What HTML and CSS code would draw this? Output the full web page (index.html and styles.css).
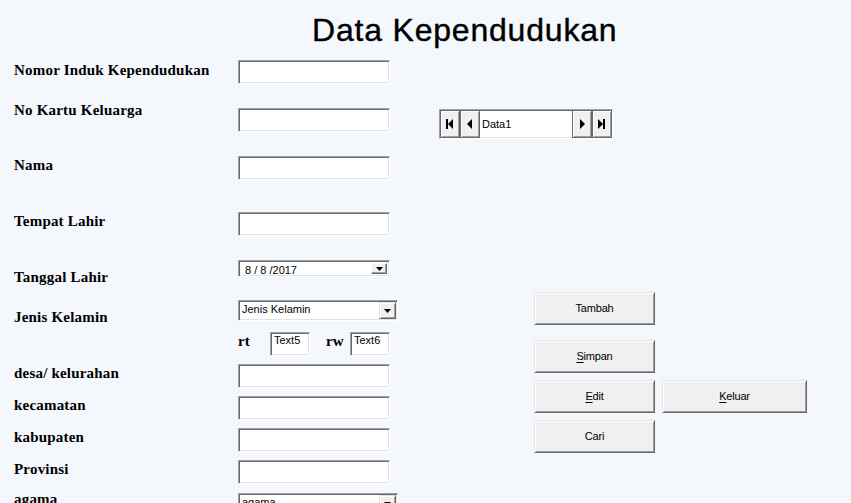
FILE: index.html
```html
<!DOCTYPE html>
<html>
<head>
<meta charset="utf-8">
<link rel="stylesheet" href="styles.css">
</head>
<body>
<div class="form">
  <h1 class="title">Data Kependudukan</h1>
  <div class="main">
    <div class="left">
      <div class="row r1"><span class="lbl">Nomor Induk Kependudukan</span><div class="txt"></div></div>
      <div class="row r2"><span class="lbl">No Kartu Keluarga</span><div class="txt"></div></div>
      <div class="row r3"><span class="lbl">Nama</span><div class="txt"></div></div>
      <div class="row r4"><span class="lbl">Tempat Lahir</span><div class="txt"></div></div>
      <div class="row r5"><span class="lbl">Tanggal Lahir</span>
        <div class="date"><span class="date-text">8 / 8 /2017</span><span class="date-btn"><svg width="7" height="4" viewBox="0 0 7 4"><polygon points="0,0 7,0 3.5,4" fill="#000"/></svg></span></div>
      </div>
      <div class="row r6"><span class="lbl">Jenis Kelamin</span>
        <div class="combo"><span class="combo-text">Jenis Kelamin</span><span class="combo-btn"><svg width="7" height="4" viewBox="0 0 7 4"><polygon points="0,0 7,0 3.5,4" fill="#000"/></svg></span></div>
      </div>
      <div class="row r7"><span class="lbl"></span>
        <div class="rtrw">
          <span class="lbl-sm rt">rt</span><div class="txt small">Text5</div>
          <span class="lbl-sm rw">rw</span><div class="txt small">Text6</div>
        </div>
      </div>
      <div class="row r8"><span class="lbl">desa/ kelurahan</span><div class="txt"></div></div>
      <div class="row r9"><span class="lbl">kecamatan</span><div class="txt"></div></div>
      <div class="row r10"><span class="lbl">kabupaten</span><div class="txt"></div></div>
      <div class="row r11"><span class="lbl">Provinsi</span><div class="txt"></div></div>
      <div class="row r12"><span class="lbl">agama</span>
        <div class="combo"><span class="combo-text">agama</span><span class="combo-btn"><svg width="7" height="4" viewBox="0 0 7 4"><polygon points="0,0 7,0 3.5,4" fill="#000"/></svg></span></div>
      </div>
    </div>
    <div class="right">
      <div class="nav">
        <span class="nav-btn"><svg width="8" height="10" viewBox="0 0 8 10"><rect x="0" y="0" width="2" height="10" fill="#000"/><polygon points="7,0 7,10 2,5" fill="#000"/></svg></span>
        <span class="nav-btn"><svg width="6" height="10" viewBox="0 0 6 10"><polygon points="5,0 5,10 0,5" fill="#000"/></svg></span>
        <span class="nav-text">Data1</span>
        <span class="nav-btn"><svg width="6" height="10" viewBox="0 0 6 10"><polygon points="1,0 1,10 6,5" fill="#000"/></svg></span>
        <span class="nav-btn"><svg width="8" height="10" viewBox="0 0 8 10"><polygon points="0,0 0,10 5,5" fill="#000"/><rect x="5" y="0" width="2" height="10" fill="#000"/></svg></span>
      </div>
      <div class="buttons">
        <button class="btn">Tambah</button>
        <button class="btn b-simpan"><u>S</u>impan</button>
        <div class="btn-row">
          <button class="btn"><u>E</u>dit</button>
          <button class="btn wide"><u>K</u>eluar</button>
        </div>
        <button class="btn">Cari</button>
      </div>
    </div>
  </div>
</div>
</body>
</html>
```

FILE: styles.css
```css
html, body {
  margin: 0;
  padding: 0;
  background: #f4f7fc;
}
.form {
  width: 851px;
  height: 503px;
  overflow: hidden;
  background: #f4f7fc;
  color: #000;
}
.title {
  margin: 0;
  height: 48px;
  box-sizing: border-box;
  padding: 12px 0 0 312px;
  font: normal 32px/36px "Liberation Sans", Arial, sans-serif;
  letter-spacing: 0.8px;
  -webkit-text-stroke: 0.4px #000;
  white-space: nowrap;
}
.main {
  display: flex;
  align-items: flex-start;
}
.left {
  width: 439px;
  padding-top: 12px;
  flex: none;
}
.row {
  display: flex;
  align-items: flex-start;
}
.lbl {
  width: 224px;
  padding-left: 14px;
  flex: none;
  font: bold 15px/17px "Liberation Serif", "Times New Roman", serif;
  letter-spacing: 0.2px;
  white-space: nowrap;
}
.r1 { height: 41px; }
.r1 .lbl { margin-top: 2px; }
.r2 { height: 55px; }
.r2 .lbl { margin-top: 1px; }
.r2 .txt { margin-top: 7px; }
.r3 { height: 56px; }
.r3 .lbl { margin-top: 1px; }
.r4 { height: 48px; }
.r4 .lbl { margin-top: 1px; }
.r5 { height: 40px; }
.r5 .lbl { margin-top: 9px; }
.r6 { height: 32px; }
.r6 .lbl { margin-top: 9px; }
.r7 { height: 32px; }
.r8, .r9, .r10 { height: 32px; }
.r8 .lbl, .r9 .lbl, .r10 .lbl, .r11 .lbl { margin-top: 1px; }
.r11 { height: 31px; }
.r12 .combo { margin-top: 2px; }

.txt {
  width: 152px;
  height: 24px;
  box-sizing: border-box;
  background: #fff;
  border: 1px solid;
  border-color: #a0a0a0 #fff #fff #a0a0a0;
  box-shadow: inset 1px 1px #696969, inset -1px -1px #e3e3e3;
  padding: 1px 2px 0 3px;
  font: 11px/13px "Liberation Sans", Arial, sans-serif;
  overflow: hidden;
  white-space: nowrap;
}
.txt.small { width: 40px; }

.rtrw {
  display: flex;
  align-items: flex-start;
}
.lbl-sm {
  font: bold 15px/17px "Liberation Serif", "Times New Roman", serif;
  margin-top: 1px;
}
.rt { width: 32px; }
.rw { width: 24px; margin-left: 16px; }

.date {
  width: 152px;
  height: 17px;
  box-sizing: border-box;
  display: flex;
  align-items: flex-start;
  background: #fff;
  border: 1px solid;
  border-color: #a0a0a0 #fff #fff #a0a0a0;
  box-shadow: inset 1px 1px #696969, inset -1px -1px #e3e3e3;
  overflow: hidden;
}
.date-text {
  flex: 1;
  padding: 3px 0 0 6px;
  font: 11px/13px "Liberation Sans", Arial, sans-serif;
  white-space: nowrap;
  height: 14px;
  overflow: hidden;
}
.date-btn {
  width: 16px;
  height: 11px;
  box-sizing: border-box;
  margin: 2px 2px 0 0;
  background: #f0f0f0;
  border: 1px solid;
  border-color: #fff #696969 #696969 #fff;
  box-shadow: inset -1px -1px #a0a0a0;
  display: flex;
  align-items: center;
  justify-content: center;
  flex: none;
}

.combo {
  width: 160px;
  height: 21px;
  box-sizing: border-box;
  display: flex;
  align-items: stretch;
  background: #fff;
  border: 1px solid;
  border-color: #a0a0a0 #fff #fff #a0a0a0;
  box-shadow: inset 1px 1px #696969, inset -1px -1px #e3e3e3;
  padding: 1px;
}
.combo-text {
  flex: 1;
  padding: 1px 0 0 2px;
  font: 11px/13px "Liberation Sans", Arial, sans-serif;
  white-space: nowrap;
  overflow: hidden;
}
.combo-btn {
  width: 17px;
  box-sizing: border-box;
  background: #f0f0f0;
  border: 1px solid;
  border-color: #e3e3e3 #696969 #696969 #e3e3e3;
  box-shadow: inset 1px 1px #fff, inset -1px -1px #a0a0a0;
  display: flex;
  align-items: center;
  justify-content: center;
  flex: none;
}

.right {
  flex: none;
}
.nav {
  margin-top: 61px;
  width: 174px;
  height: 30px;
  box-sizing: border-box;
  display: flex;
  border: 1px solid;
  border-color: #a0a0a0 #fff #fff #a0a0a0;
  background: #fff;
}
.nav-btn {
  width: 20px;
  box-sizing: border-box;
  background: #f0f0f0;
  border: 1px solid;
  border-color: #696969;
  box-shadow: inset 1px 1px #fff, inset -1px -1px #a0a0a0;
  display: flex;
  align-items: center;
  justify-content: center;
  flex: none;
}
.nav-text {
  flex: 1;
  border-top: 1px solid #696969;
  border-bottom: 1px solid #e3e3e3;
  padding-left: 2px;
  font: 11px/26px "Liberation Sans", Arial, sans-serif;
  white-space: nowrap;
}

.buttons {
  margin: 153px 0 0 95px;
  display: flex;
  flex-direction: column;
  gap: 7px;
}
.btn {
  width: 121px;
  height: 33px;
  box-sizing: border-box;
  margin: 0;
  padding: 0;
  background: #f0f0f0;
  border: 1px solid;
  border-color: #e3e3e3 #696969 #696969 #e3e3e3;
  box-shadow: inset 1px 1px #fff, inset -1px -1px #a0a0a0;
  font: 11px/13px "Liberation Sans", Arial, sans-serif;
  letter-spacing: -0.2px;
  color: #000;
  text-align: center;
}
.b-simpan { margin-top: 8px; }
.btn-row {
  display: flex;
  gap: 7px;
}
.btn.wide { width: 145px; }
u { text-decoration: underline; text-underline-offset: 2px; }
```
